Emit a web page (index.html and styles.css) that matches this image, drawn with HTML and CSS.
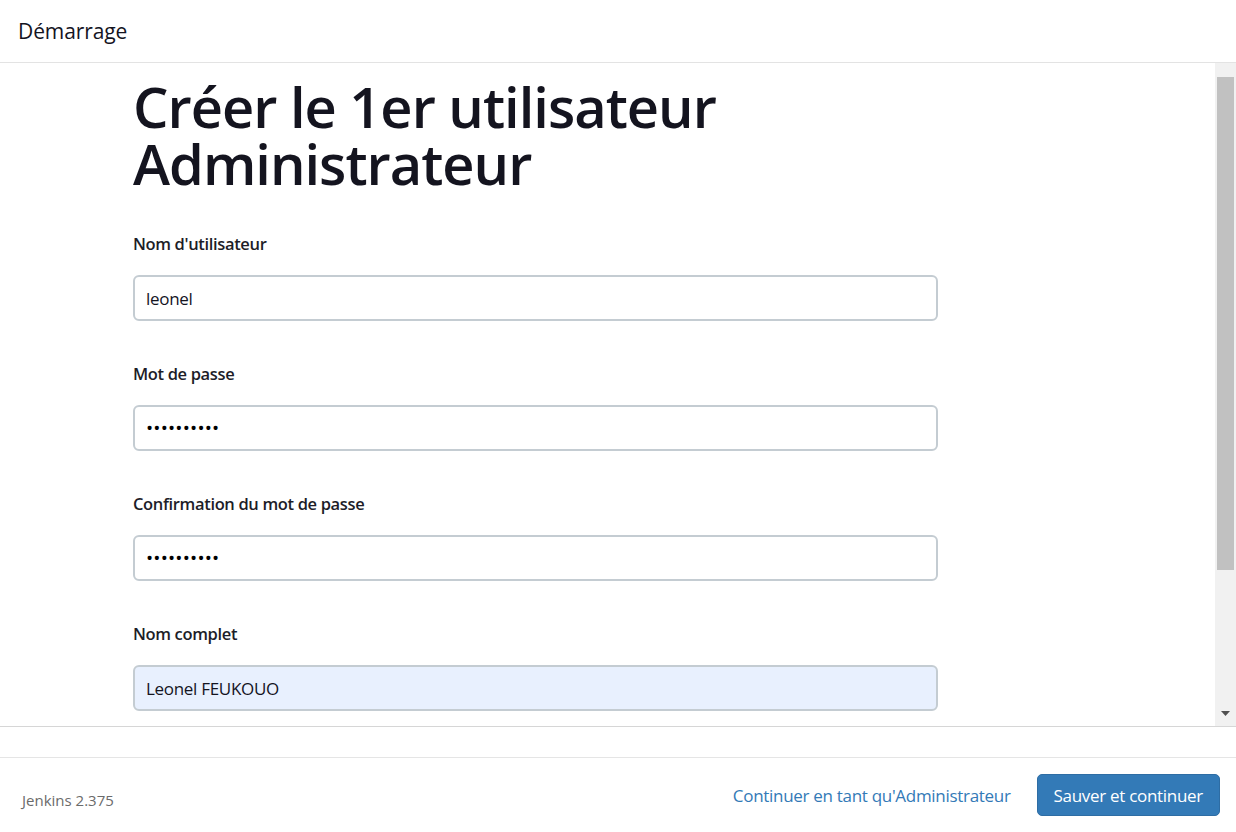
FILE: index.html
```html
<!DOCTYPE html>
<html lang="fr">
<head>
<meta charset="utf-8">
<title>Démarrage</title>
<link rel="stylesheet" href="styles.css">
</head>
<body>
<div class="wizard">
  <header class="top">
    <h2 class="top-title">Démarrage</h2>
  </header>
  <div class="body-area">
    <main class="pane">
      <div class="content">
        <h1 class="title">Créer le 1er utilisateur<br>Administrateur</h1>
        <form class="form">
          <div class="field">
            <label class="label" for="u">Nom d'utilisateur</label>
            <input class="input" id="u" type="text" value="leonel">
          </div>
          <div class="field">
            <label class="label" for="p1">Mot de passe</label>
            <input class="input input-pw" id="p1" type="password" value="abcdefghij">
          </div>
          <div class="field">
            <label class="label" for="p2">Confirmation du mot de passe</label>
            <input class="input input-pw" id="p2" type="password" value="abcdefghij">
          </div>
          <div class="field">
            <label class="label" for="fn">Nom complet</label>
            <input class="input input-filled" id="fn" type="text" value="Leonel FEUKOUO">
          </div>
        </form>
      </div>
    </main>
    <div class="scrollbar" aria-hidden="true">
      <div class="sb-up"></div>
      <div class="sb-thumb"></div>
      <div class="sb-rest"></div>
      <div class="sb-down">
        <svg width="9" height="5" viewBox="0 0 9 5"><polygon points="0,0 9,0 4.5,5" fill="#505050"/></svg>
      </div>
    </div>
  </div>
  <div class="gap"></div>
  <footer class="footer">
    <span class="version">Jenkins 2.375</span>
    <div class="actions">
      <a class="link" href="#">Continuer en tant qu'Administrateur</a>
      <button class="btn" type="button">Sauver et continuer</button>
    </div>
  </footer>
</div>
</body>
</html>
```

FILE: styles.css
```css
html, body {
  margin: 0;
  padding: 0;
  background: #fff;
}

body {
  font-family: "Open Sans", "Noto Sans", sans-serif;
  color: #1d1d28;
}

.wizard {
  display: flex;
  flex-direction: column;
  height: 832px;
}

.top {
  height: 62px;
  border-bottom: 1px solid #e3e3e3;
  display: flex;
  align-items: center;
  padding-left: 18px;
  flex: none;
}

.top-title {
  margin: 0;
  font-size: 21px;
  font-weight: 500;
  color: #14141f;
  letter-spacing: -0.1px;
}

.body-area {
  height: 663px;
  flex: none;
  display: flex;
  border-bottom: 1px solid #d6d6d6;
}

.pane {
  flex: 1;
  overflow: hidden;
}

.scrollbar {
  width: 21px;
  flex: none;
  background: #f1f1f1;
  display: flex;
  flex-direction: column;
}

.sb-up {
  height: 14px;
  flex: none;
}

.sb-thumb {
  height: 493px;
  flex: none;
  margin: 0 2px;
  background: #c1c1c1;
}

.sb-rest {
  flex: 1;
}

.sb-down {
  height: 17px;
  flex: none;
  margin-bottom: 4px;
  display: flex;
  align-items: center;
  justify-content: center;
}

.sb-down svg {
  display: block;
}

.content {
  padding: 15px 0 40px 133px;
}

.title {
  margin: 0 0 40px;
  font-size: 56px;
  line-height: 57px;
  font-weight: 600;
  color: #14141f;
  letter-spacing: -1px;
}

.form {
  display: flex;
  flex-direction: column;
  gap: 41px;
}

.field {
  display: flex;
  flex-direction: column;
  gap: 19px;
}

.label {
  font-size: 16.5px;
  line-height: 24px;
  font-weight: 600;
  color: #1d1d28;
  letter-spacing: -0.35px;
}

.input {
  box-sizing: border-box;
  width: 805px;
  height: 46px;
  border: 2px solid #c4ccd2;
  border-radius: 6px;
  padding: 0 11px;
  font-family: "Open Sans", "Noto Sans", sans-serif;
  font-size: 17px;
  color: #14141f;
  background: #fff;
  outline: none;
  letter-spacing: -0.3px;
}

.input-pw {
  font-size: 19px;
  letter-spacing: 0.2px;
  color: #000;
}

.input-filled {
  background: #e8f0fe;
}

.gap {
  height: 30px;
  flex: none;
  border-bottom: 1px solid #e5e5e5;
}

.footer {
  flex: 1;
  display: flex;
  align-items: center;
  justify-content: space-between;
  padding: 0 16px 0 22px;
}

.version {
  font-size: 15px;
  color: #6b6b6b;
  padding-top: 10px;
}

.actions {
  display: flex;
  align-items: center;
  gap: 26px;
}

.link {
  font-size: 17px;
  color: #337ab7;
  text-decoration: none;
  letter-spacing: -0.3px;
}

.btn {
  height: 42px;
  padding: 0 16px;
  background: #337ab7;
  color: #fff;
  border: 1px solid #2e6da4;
  border-radius: 5px;
  font-family: "Open Sans", "Noto Sans", sans-serif;
  font-size: 17px;
  letter-spacing: -0.3px;
}
```
